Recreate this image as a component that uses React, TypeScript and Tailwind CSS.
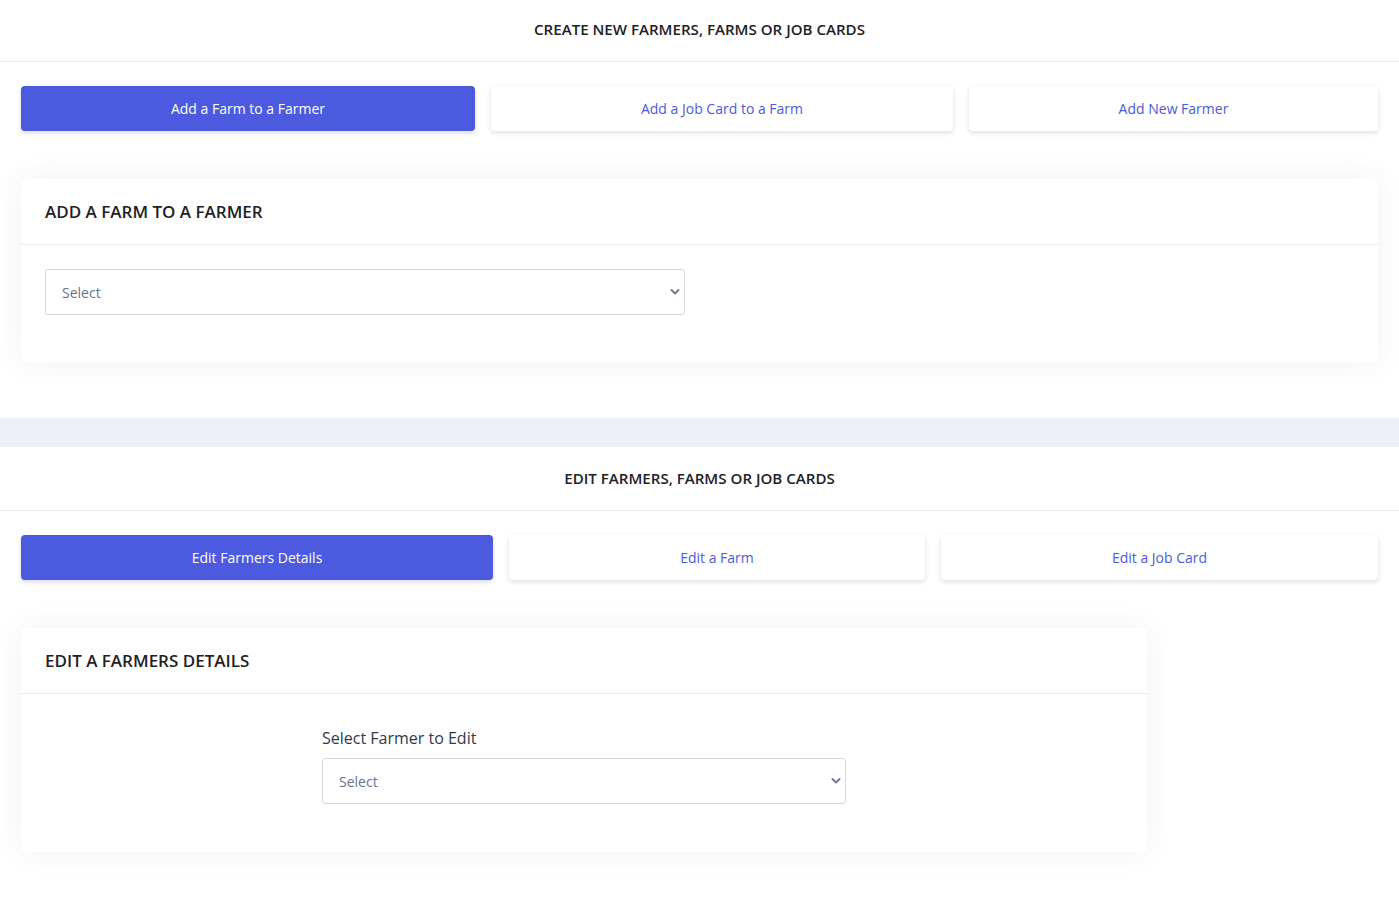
const font = { fontFamily: '"Open Sans", "Noto Sans", sans-serif' };

function Chevron() {
    return (
        <svg
            className="pointer-events-none absolute right-[5px] top-1/2 -translate-y-1/2"
            width="10"
            height="7"
            viewBox="0 0 10 7"
            fill="none"
        >
            <path
                d="M1.5 1.5 L5 5 L8.5 1.5"
                stroke="#6f7b8f"
                strokeWidth="2"
                strokeLinecap="round"
                strokeLinejoin="round"
            />
        </svg>
    );
}

function SelectBox({ width }: { width: string }) {
    return (
        <div className={`relative ${width}`}>
            <select className="h-[46px] w-full appearance-none rounded-[3px] border border-[#d4d8de] bg-white pl-4 pr-8 text-[14px] text-[#66738a] outline-none">
                <option>Select</option>
            </select>
            <Chevron />
        </div>
    );
}

interface TabButtonProps {
    label: string;
    active?: boolean;
    width: string;
}

function TabButton({ label, active, width }: TabButtonProps) {
    return (
        <button
            className={`h-[45px] ${width} rounded-[4px] text-[14px] ${
                active
                    ? 'bg-[#4b5ade] text-white shadow-[0_2px_4px_rgba(50,50,93,0.18)]'
                    : 'bg-white text-[#4b5ade] shadow-[0_2px_5px_rgba(50,50,93,0.16)]'
            }`}
        >
            {label}
        </button>
    );
}

function SectionHeader({ title, height }: { title: string; height: string }) {
    return (
        <div
            className={`flex ${height} items-center justify-center border-b border-[#e9ebee]`}
        >
            <h2 className="text-[15.1px] font-semibold text-[#1e2125]">
                {title}
            </h2>
        </div>
    );
}

function Card({
    title,
    width,
    children,
}: {
    title: string;
    width: string;
    children: React.ReactNode;
}) {
    return (
        <div
            className={`${width} rounded-[5px] bg-white shadow-[0_0_30px_rgba(40,50,90,0.07)]`}
        >
            <div className="flex h-[66px] items-center border-b border-[#e9ebee] px-6">
                <h3 className="text-[17px] font-semibold text-[#1e2125]">
                    {title}
                </h3>
            </div>
            {children}
        </div>
    );
}

export default function App() {
    return (
        <div className="min-h-[904px] w-[1399px] bg-white" style={font}>
            <SectionHeader
                title="CREATE NEW FARMERS, FARMS OR JOB CARDS"
                height="h-[62px] pb-[3px]"
            />
            <div className="flex gap-4 px-[21px] pt-6">
                <TabButton label="Add a Farm to a Farmer" active width="w-[454px]" />
                <TabButton label="Add a Job Card to a Farm" width="w-[462px]" />
                <TabButton label="Add New Farmer" width="w-[409px]" />
            </div>
            <div className="px-[21px] pb-[55px] pt-[48px]">
                <Card title="ADD A FARM TO A FARMER" width="w-full">
                    <div className="px-6 pb-12 pt-6">
                        <SelectBox width="w-[640px]" />
                    </div>
                </Card>
            </div>

            <div className="h-[29px] bg-[#eef0f8]" />

            <SectionHeader
                title="EDIT FARMERS, FARMS OR JOB CARDS"
                height="h-[64px]"
            />
            <div className="flex gap-4 px-[21px] pt-6">
                <TabButton label="Edit Farmers Details" active width="w-[472px]" />
                <TabButton label="Edit a Farm" width="w-[416px]" />
                <TabButton label="Edit a Job Card" width="w-[437px]" />
            </div>
            <div className="px-[21px] pb-12 pt-[48px]">
                <Card title="EDIT A FARMERS DETAILS" width="w-[1126px]">
                    <div className="flex justify-center pb-12 pt-[32px]">
                        <div className="flex w-[524px] flex-col gap-[8px]">
                            <label className="text-[16px] text-[#2f3a4d]">
                                Select Farmer to Edit
                            </label>
                            <SelectBox width="w-full" />
                        </div>
                    </div>
                </Card>
            </div>
        </div>
    );
}
